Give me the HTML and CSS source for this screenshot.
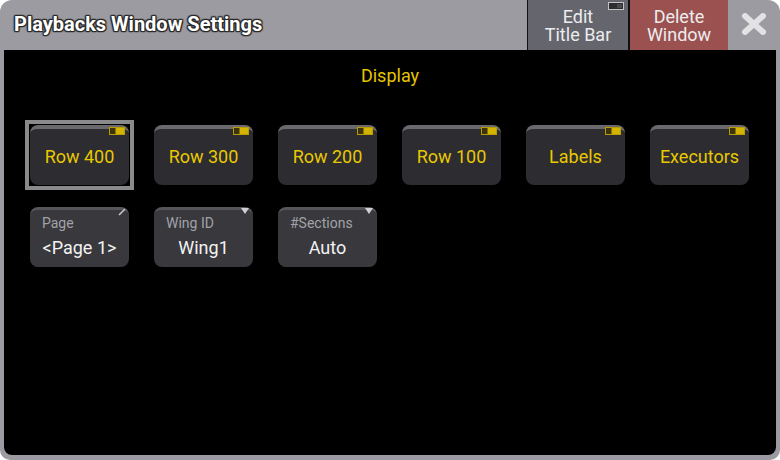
FILE: index.html
```html
<!DOCTYPE html>
<html>
<head>
<meta charset="utf-8">
<link rel="stylesheet" href="styles.css">
</head>
<body>
<div class="window">
  <div class="titlebar">
    <div class="title">Playbacks Window Settings</div>
    <div class="tb-btn edit">
      <span class="mini-ind"><span></span></span>
      <span>Edit<br>Title Bar</span>
    </div>
    <div class="tb-btn delete"><span>Delete<br>Window</span></div>
    <div class="close">
      <svg width="26" height="22" viewBox="0 0 26 22"><path d="M4 3 L22 19 M22 3 L4 19" stroke="#e2e2e4" stroke-width="6" stroke-linecap="round"/></svg>
    </div>
  </div>
  <div class="content">
    <div class="heading">Display</div>
    <div class="grid">
      <div class="btn toggle selected"><span class="ind"><span></span></span>Row 400</div>
      <div class="btn toggle"><span class="ind"><span></span></span>Row 300</div>
      <div class="btn toggle"><span class="ind"><span></span></span>Row 200</div>
      <div class="btn toggle"><span class="ind"><span></span></span>Row 100</div>
      <div class="btn toggle"><span class="ind"><span></span></span>Labels</div>
      <div class="btn toggle"><span class="ind"><span></span></span>Executors</div>
      <div class="btn field">
        <svg class="pen" width="10" height="10" viewBox="0 0 10 10"><path d="M2 8 L8 2" stroke="#c8c8cc" stroke-width="1.6"/></svg>
        <span class="lbl">Page</span><span class="val">&lt;Page 1&gt;</span>
      </div>
      <div class="btn field">
        <span class="tri"></span>
        <span class="lbl">Wing ID</span><span class="val">Wing1</span>
      </div>
      <div class="btn field">
        <span class="tri"></span>
        <span class="lbl">#Sections</span><span class="val">Auto</span>
      </div>
    </div>
  </div>
</div>
</body>
</html>
```
FILE: styles.css
```css
html, body {
  margin: 0;
  padding: 0;
  background: #ffffff;
}
body {
  font-family: Roboto, "Liberation Sans", sans-serif;
}
.window {
  width: 780px;
  height: 460px;
  background: #9b9ba1;
  border-radius: 12px 12px 10px 10px;
  display: flex;
  flex-direction: column;
  overflow: hidden;
}
.titlebar {
  height: 50px;
  display: flex;
  flex-shrink: 0;
}
.title {
  flex: 1;
  padding-left: 14px;
  display: flex;
  align-items: center;
  font-size: 20px;
  font-weight: 700;
  color: #ffffff;
  padding-bottom: 2px;
  text-shadow: 1px 0 1px #2a2a2a, -1px 0 1px #2a2a2a, 0 1px 1px #2a2a2a, 0 -1px 1px #2a2a2a, 1px 1px 1px #2a2a2a, -1px -1px 1px #2a2a2a, 1px -1px 1px #2a2a2a, -1px 1px 1px #2a2a2a;
}
.tb-btn {
  width: 99px;
  flex-shrink: 0;
  position: relative;
  display: flex;
  align-items: center;
  justify-content: center;
  text-align: center;
  font-size: 18px;
  line-height: 18px;
  color: #ececee;
  border-left: 1px solid #111;
  padding-top: 2px;
  box-sizing: border-box;
}
.edit {
  width: 101px;
  background: #64656d;
}
.delete {
  width: 100px;
  background: #9b5150;
  border-left: 2px solid #111;
}
.mini-ind {
  position: absolute;
  top: 2px;
  right: 4px;
  width: 14px;
  height: 6px;
  border: 1px solid #c4c4c8;
  background: #2e2e32;
}
.mini-ind span {
  position: absolute;
  right: 1px;
  top: 1px;
  width: 5px;
  height: 4px;
  background: #4a4a50;
}
.close {
  width: 52px;
  flex-shrink: 0;
  display: flex;
  align-items: center;
  justify-content: center;
  padding-bottom: 2px;
}
.content {
  flex: 1;
  margin: 0 4px 5px 4px;
  background: #000;
  border-radius: 0 0 8px 8px;
  padding-top: 16px;
  padding-left: 26px;
}
.heading {
  text-align: center;
  font-size: 18px;
  line-height: 20px;
  color: #e6c400;
  padding-right: 26px;
}
.grid {
  margin-top: 39px;
  display: grid;
  grid-template-columns: repeat(6, 99px);
  grid-auto-rows: 60px;
  column-gap: 25px;
  row-gap: 22px;
}
.btn {
  position: relative;
  background: #2c2c31;
  border-radius: 8px;
  border-top: 4px solid #6a6a6e;
  box-sizing: border-box;
}
.toggle {
  display: flex;
  align-items: center;
  justify-content: center;
  font-size: 18px;
  color: #e8c800;
  padding-bottom: 2px;
}
.selected::before {
  content: "";
  position: absolute;
  left: -5px;
  right: -5px;
  top: -9px;
  bottom: -5px;
  border: 4px solid #8a8a8c;
}
.ind {
  position: absolute;
  top: -2px;
  right: 4px;
  width: 14px;
  height: 6px;
  border: 1px solid #b89c00;
  background: #d4b400;
}
.ind span {
  position: absolute;
  left: 0;
  top: 0;
  width: 5px;
  height: 6px;
  background: #3c3410;
  border-right: 1px solid #8a7400;
}
.field {
  border-top: 3px solid #55555a;
  background: #38383d;
  display: flex;
  flex-direction: column;
}
.lbl {
  font-size: 14px;
  line-height: 16px;
  color: #a2a2a8;
  padding-left: 12px;
  margin-top: 5px;
}
.val {
  font-size: 18px;
  line-height: 20px;
  color: #f2f2f2;
  text-align: center;
  margin-top: 7px;
}
.tri {
  position: absolute;
  top: -2px;
  right: 4px;
  width: 0;
  height: 0;
  border-left: 4px solid transparent;
  border-right: 4px solid transparent;
  border-top: 6px solid #d0d0d4;
}
.pen {
  position: absolute;
  top: -3px;
  right: 2px;
}
```
